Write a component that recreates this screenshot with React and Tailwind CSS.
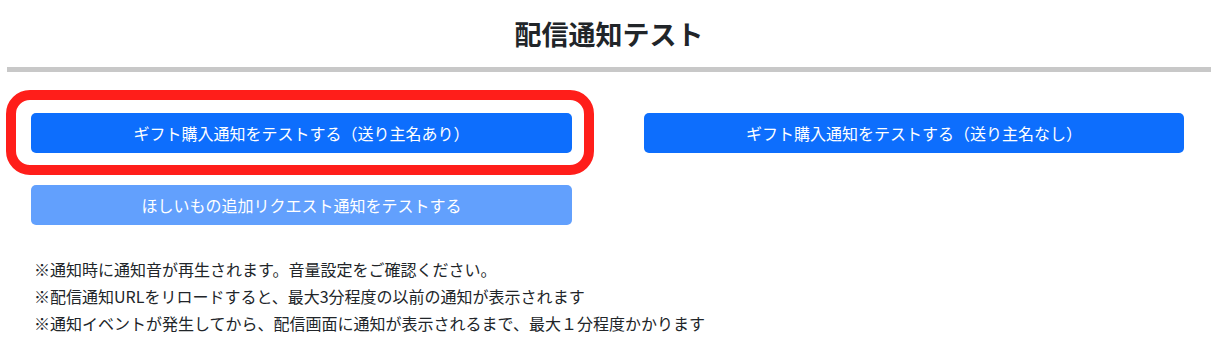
import React from "react";

const notes = [
  "※通知時に通知音が再生されます。音量設定をご確認ください。",
  "※配信通知URLをリロードすると、最大3分程度の以前の通知が表示されます",
  "※通知イベントが発生してから、配信画面に通知が表示されるまで、最大１分程度かかります"
];

const TestButton = ({ label, disabled }) => {
  return <button type="button" disabled={disabled} className={`block h-[40px] w-full rounded-[5px] text-center text-[16px] leading-[40px] text-white ${disabled ? "bg-[#62a0fd]" : "bg-[#0d6efd]"}`}>
    {label}
  </button>;
};

const App = () => {
  return <div className="min-h-[359px] bg-white pl-[7px] pr-[10px] font-['Noto_Sans_CJK_JP','Noto_Sans',sans-serif] text-[#212529]">
    <h1 className="pt-[14px] pb-[13px] text-center text-[27px] font-bold leading-[40px]">配信通知テスト</h1>
    <div className="h-[5px] bg-[#c8c8c8]" />

    <div className="grid grid-cols-2 pt-[41px]">
      <div className="flex flex-col gap-[32px] pl-[24px] pr-[37px]">
        {/* highlighted with an annotation ring */}
        <div className="relative">
          <TestButton label="ギフト購入通知をテストする（送り主名あり）" />
          <div className="pointer-events-none absolute -top-[23px] -bottom-[22px] -left-[25px] -right-[22px] rounded-[24px] border-[10px] border-[#ff1e1a]" />
        </div>
        <TestButton label="ほしいもの追加リクエスト通知をテストする" disabled />
      </div>
      <div className="pl-[35px] pr-[27px]">
        <TestButton label="ギフト購入通知をテストする（送り主名なし）" />
      </div>
    </div>

    <div className="mt-[31px] pl-[27px] text-[16px] leading-[27px]">
      {notes.map(n => <p key={n}>{n}</p>)}
    </div>
  </div>;
};

export default App;
